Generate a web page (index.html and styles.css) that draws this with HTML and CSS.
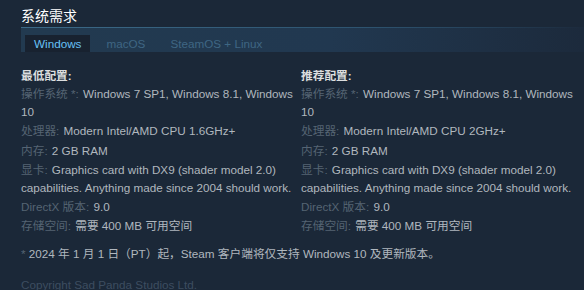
FILE: index.html
```html
<!DOCTYPE html>
<html lang="zh-CN">
<head>
  <meta charset="UTF-8">
  <title>系统需求</title>
  <link rel="stylesheet" href="styles.css">
</head>
<body>
  <div class="sysreq">
    <h2>系统需求</h2>

    <div class="tabs">
      <div class="tab active">Windows</div>
      <div class="tab">macOS</div>
      <div class="tab">SteamOS + Linux</div>
    </div>

    <div class="columns">
      <div class="col">
        <div class="col-title">最低配置:</div>
        <ul>
          <li><span class="label">操作系统 *:</span> Windows 7 SP1, Windows 8.1, Windows 10</li>
          <li><span class="label">处理器:</span> Modern Intel/AMD CPU 1.6GHz+</li>
          <li><span class="label">内存:</span> 2 GB RAM</li>
          <li><span class="label">显卡:</span> Graphics card with DX9 (shader model 2.0) capabilities. Anything made since 2004 should work.</li>
          <li><span class="label">DirectX 版本:</span> 9.0</li>
          <li><span class="label">存储空间:</span> 需要 400 MB 可用空间</li>
        </ul>
      </div>
      <div class="col">
        <div class="col-title">推荐配置:</div>
        <ul>
          <li><span class="label">操作系统 *:</span> Windows 7 SP1, Windows 8.1, Windows 10</li>
          <li><span class="label">处理器:</span> Modern Intel/AMD CPU 2GHz+</li>
          <li><span class="label">内存:</span> 2 GB RAM</li>
          <li><span class="label">显卡:</span> Graphics card with DX9 (shader model 2.0) capabilities. Anything made since 2004 should work.</li>
          <li><span class="label">DirectX 版本:</span> 9.0</li>
          <li><span class="label">存储空间:</span> 需要 400 MB 可用空间</li>
        </ul>
      </div>
    </div>

    <p class="note"><span class="star">*</span> 2024 年 1 月 1 日（PT）起，Steam 客户端将仅支持 Windows 10 及更新版本。</p>

    <p class="copyright">Copyright Sad Panda Studios Ltd.</p>
  </div>
</body>
</html>
```

FILE: styles.css
```css
body {
  margin: 0;
  background-color: #1b2838;
  font-family: "Liberation Sans", Arial, "Noto Sans CJK SC", sans-serif;
  font-size: 11.7px;
  color: #b0b7be;
  overflow: hidden;
}
.sysreq {
  padding: 8px 0 0 21px;
}
h2 {
  margin: 0;
  font-size: 14px;
  font-weight: normal;
  color: #ffffff;
  line-height: 17px;
}
.tabs {
  display: flex;
  margin-top: 2px;
  height: 25px;
  padding: 7px 0 0 4px;
  box-sizing: border-box;
  border-top: 1px solid transparent;
  border-image: linear-gradient(to right, #3c6a88 0%, #2e5470 60%, rgba(46,84,112,0) 100%) 1;
  border-bottom: 0;
  background: linear-gradient(to right, #223a50 0%, #213850 55%, #1c2a3c 100%);
}
.tab {
  padding: 0 9px;
  line-height: 18px;
  color: #3f6683;
  margin-right: 7px;
}
.tab.active {
  background-color: #182230;
  color: #67c1f5;
}
.columns {
  display: grid;
  grid-template-columns: 272px 272px;
  gap: 8px;
  margin-top: 15px;
}
.col-title {
  color: #dcdedf;
  font-weight: bold;
  line-height: 18px;
}
ul {
  list-style: none;
  margin: 0;
  padding: 0;
}
li {
  line-height: 18px;
  margin-bottom: 1.3px;
}
.label {
  color: #556473;
  padding-right: 1px;
}
.note {
  margin: 8px 0 0;
  line-height: 18px;
}
.star {
  color: #556473;
}
.copyright {
  margin: 13px 0 0;
  line-height: 18px;
  color: #3d4d60;
}
```
